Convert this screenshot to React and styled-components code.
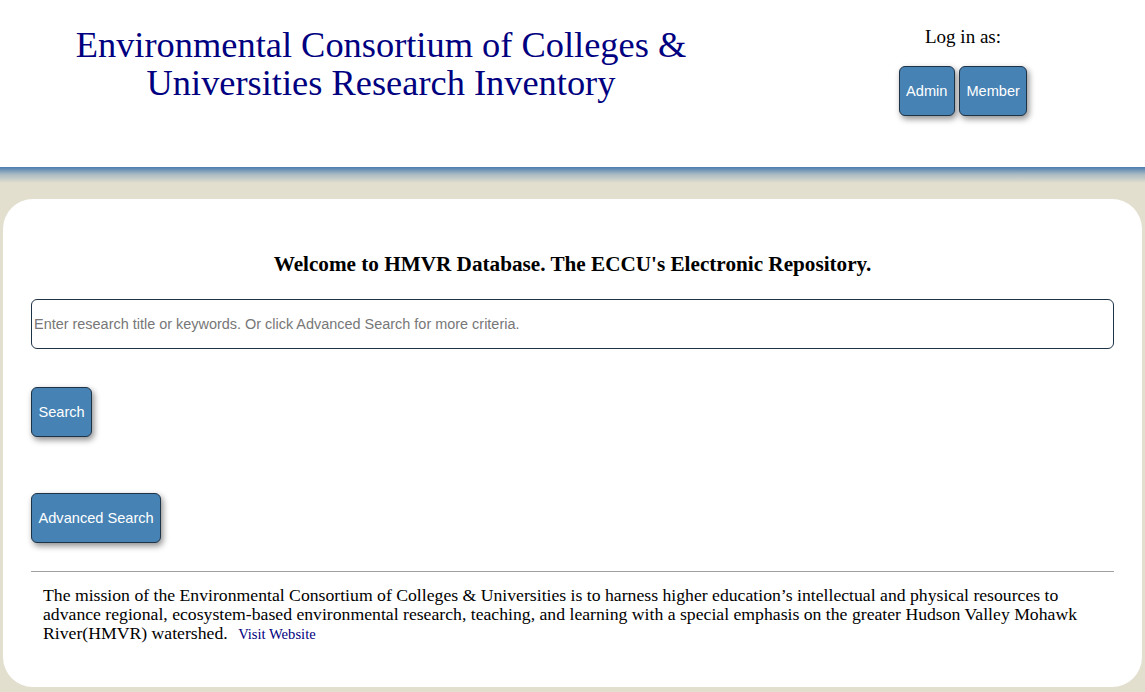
import React from 'react';
import styled, { createGlobalStyle } from 'styled-components';

const GlobalStyle = createGlobalStyle`
  body {
    margin: 0;
    background-color: #e2dfcf;
    font-family: "Liberation Serif", Georgia, serif;
  }
`;

const App = () => {
  return (
    <>
      <GlobalStyle />
      <Header>
        <TitleBlock>
          <Title>
            Environmental Consortium of Colleges &amp;<br />
            Universities Research Inventory
          </Title>
        </TitleBlock>
        <LoginPanel>
          <LoginLabel>Log in as:</LoginLabel>
          <ButtonRow>
            <BlueButton>Admin</BlueButton>
            <BlueButton>Member</BlueButton>
          </ButtonRow>
        </LoginPanel>
      </Header>
      <Band />
      <Page>
        <Card>
          <Welcome>Welcome to HMVR Database. The ECCU's Electronic Repository.</Welcome>
          <SearchInput placeholder="Enter research title or keywords. Or click Advanced Search for more criteria." />
          <ButtonSlot $gap={38}>
            <BlueButton>Search</BlueButton>
          </ButtonSlot>
          <ButtonSlot $gap={56}>
            <BlueButton>Advanced Search</BlueButton>
          </ButtonSlot>
          <Divider />
          <Mission>
            The mission of the Environmental Consortium of Colleges &amp; Universities is to harness higher
            education’s intellectual and physical resources to advance regional, ecosystem-based environmental
            research, teaching, and learning with a special emphasis on the greater Hudson Valley Mohawk
            River(HMVR) watershed. <VisitLink href="#">Visit Website</VisitLink>
          </Mission>
        </Card>
      </Page>
    </>
  );
};

export default App;

const Header = styled.header`
  display: flex;
  height: 167px;
  background-color: #ffffff;
`;

const TitleBlock = styled.div`
  width: 762px;
  padding-top: 26px;
  text-align: center;
`;

const Title = styled.h1`
  margin: 0;
  font-family: "Liberation Serif", Georgia, serif;
  font-weight: normal;
  font-size: 36.4px;
  line-height: 38px;
  color: #000080;
`;

const LoginPanel = styled.div`
  width: 170px;
  margin-left: 116px;
  padding-top: 25px;
  display: flex;
  flex-direction: column;
  align-items: center;
`;

const LoginLabel = styled.div`
  font-size: 19px;
  line-height: 24px;
  color: #000000;
`;

const ButtonRow = styled.div`
  display: flex;
  gap: 4px;
  margin-top: 17px;
`;

const BlueButton = styled.button`
  height: 50px;
  padding: 0 6.5px;
  font-family: "Liberation Sans", Arial, sans-serif;
  font-size: 14.6px;
  color: #ffffff;
  background-color: #4682b4;
  border: 1px solid #1f3346;
  border-radius: 6px;
  box-shadow: 2px 3px 6px rgba(0, 0, 0, 0.45);
  cursor: pointer;
`;

const Band = styled.div`
  height: 16px;
  background: linear-gradient(to bottom, #4a7db0 0%, #a9b9c2 45%, #e2dfcf 100%);
`;

const Page = styled.div`
  padding: 16px 3px 4px;
`;

const Card = styled.main`
  display: flex;
  flex-direction: column;
  height: 488px;
  box-sizing: border-box;
  padding: 50px 28px 0;
  background-color: #ffffff;
  border-radius: 30px;
`;

const Welcome = styled.h3`
  margin: 0;
  font-family: "Liberation Serif", Georgia, serif;
  font-size: 21.2px;
  line-height: 30px;
  font-weight: bold;
  text-align: center;
  color: #000000;
`;

const SearchInput = styled.input`
  margin-top: 20px;
  height: 50px;
  box-sizing: border-box;
  padding: 0 2px;
  font-family: "Liberation Sans", Arial, sans-serif;
  font-size: 14.45px;
  border: 1px solid #1f3346;
  border-radius: 6px;
  outline: none;
  &::placeholder {
    color: #777777;
  }
`;

const ButtonSlot = styled.div`
  margin-top: ${(p) => p.$gap}px;
`;

const Divider = styled.hr`
  margin: 28px 0 0;
  border: none;
  border-top: 1px solid #a0a0a0;
  height: 0;
`;

const Mission = styled.p`
  margin: 14px 0 0;
  padding: 0 12px;
  font-family: "Liberation Serif", Georgia, serif;
  font-size: 17.7px;
  line-height: 19px;
  color: #000000;
`;

const VisitLink = styled.a`
  margin-left: 6px;
  font-size: 14.6px;
  color: #000080;
  text-decoration: none;
`;
